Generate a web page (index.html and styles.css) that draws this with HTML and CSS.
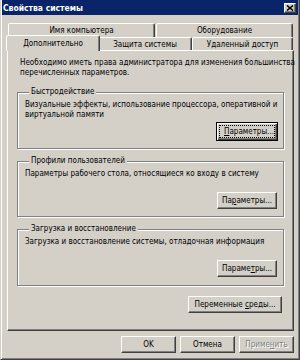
FILE: index.html
```html
<!DOCTYPE html>
<html lang="ru">
<head>
<meta charset="utf-8">
<title>Свойства системы</title>
<link rel="stylesheet" href="styles.css">
</head>
<body>
<div class="window">
  <div class="titlebar">
    <span class="title">Свойства системы</span>
    <span class="close"><svg width="8" height="6" viewBox="0 0 8 6"><path d="M1 0.5L7 5.5M7 0.5L1 5.5" stroke="#000" stroke-width="1.6" fill="none"/></svg></span>
  </div>
  <div class="tabs">
    <div class="tabrow back">
      <div class="tab t-name">Имя компьютера</div>
      <div class="tab t-hw">Оборудование</div>
    </div>
    <div class="tabrow front">
      <div class="tab sel t-adv">Дополнительно</div>
      <div class="tab t-prot">Защита системы</div>
      <div class="tab t-remote">Удаленный доступ</div>
    </div>
  </div>
  <div class="panel">
    <p class="intro">Необходимо иметь права администратора для изменения большинства<br>перечисленных параметров.</p>
    <div class="group">
      <div class="glabel">Быстродействие</div>
      <p class="gdesc">Визуальные эффекты, использование процессора, оперативной и<br>виртуальной памяти</p>
      <div class="gbtns"><button class="btn def"><span class="focus"><u>П</u>араметры...</span></button></div>
    </div>
    <div class="group">
      <div class="glabel">Профили пользователей</div>
      <p class="gdesc">Параметры рабочего стола, относящиеся ко входу в систему</p>
      <div class="gbtns"><button class="btn"><span>Па<u>р</u>аметры...</span></button></div>
    </div>
    <div class="group g3">
      <div class="glabel">Загрузка и восстановление</div>
      <p class="gdesc">Загрузка и восстановление системы, отладочная информация</p>
      <div class="gbtns"><button class="btn"><span>Параме<u>т</u>ры...</span></button></div>
    </div>
    <div class="envrow"><button class="btn env"><span>Переменные <u>с</u>реды...</span></button></div>
  </div>
  <div class="footer">
    <button class="btn"><span>OK</span></button>
    <button class="btn"><span>Отмена</span></button>
    <button class="btn dis"><span>Приме<u>н</u>ить</span></button>
  </div>
</div>
</body>
</html>
```
FILE: styles.css
```css
* { box-sizing: border-box; }
html, body { margin: 0; padding: 0; background: #d4d0c8; }
body {
  font-family: "DejaVu Sans Condensed", "DejaVu Sans", sans-serif;
  font-size: 8px;
  color: #000;
}
.window {
  width: 300px;
  height: 360px;
  background: #d4d0c8;
  border: 1px solid;
  border-top: 0;
  border-color: #d4d0c8 #404040 #404040 #d4d0c8;
  box-shadow: inset 1px 0 #fff, inset -1px -1px #808080;
  display: flex;
  flex-direction: column;
}
.titlebar {
  height: 15px;
  margin: 0 1px;
  background: #0a246a;
  display: flex;
  align-items: center;
  justify-content: space-between;
  padding: 0 2px 0 1px;
}
.title {
  color: #fff;
  font-weight: bold;
  font-size: 8.5px;
  white-space: nowrap;
}
.close {
  width: 12px;
  height: 10px;
  background: #d4d0c8;
  border: 1px solid;
  border-color: #fff #404040 #404040 #fff;
  box-shadow: inset -1px -1px #808080;
  display: flex;
  align-items: center;
  justify-content: center;
}
.close svg { display: block; }
.tabs { margin: 8px 0 0 7px; }
.tabrow { display: flex; }
.tab {
  background: #d4d0c8;
  border: 1px solid;
  border-bottom: 0;
  border-color: #fff #404040 transparent #fff;
  box-shadow: inset -1px 0 #808080;
  border-radius: 2px 2px 0 0;
  display: flex;
  align-items: center;
  justify-content: center;
  white-space: nowrap;
}
.back .tab { height: 14px; }
.front .tab { height: 13px; }
.t-name { width: 147px; margin-right: 1px; }
.t-hw { width: 137px; }
.t-adv { width: 90px; }
.t-prot { width: 94px; }
.t-remote { width: 101px; }
.tab.sel {
  position: relative;
  z-index: 2;
  width: 94px;
  height: 16px;
  margin: -2px -2px -1px -2px;
  padding-bottom: 1px;
}
.panel {
  margin-left: 6px;
  width: 287px;
  height: 281px;
  border: 1px solid;
  border-color: #fff #404040 #404040 #fff;
  box-shadow: inset -1px -1px #808080;
  padding: 7px 9px 0 9px;
}
.intro {
  margin: 0 0 0 3px;
  line-height: 9.5px;
  white-space: nowrap;
}
.group {
  margin-top: 15px;
  border: 1px solid #808080;
  box-shadow: 1px 1px #fff, inset 1px 1px #fff;
  padding: 0 6px 7px 7px;
  width: 267px;
}
.group + .group { margin-top: 12px; }
.g3 { padding-bottom: 8px; }
.glabel {
  width: fit-content;
  margin: -6px 0 0 4px;
  padding: 0 2px;
  line-height: 10px;
  background: #d4d0c8;
  white-space: nowrap;
}
.gdesc {
  margin: 3px 0 0 0;
  height: 19px;
  line-height: 9.5px;
  white-space: nowrap;
}
.gbtns {
  display: flex;
  justify-content: flex-end;
  margin-top: 4px;
}
.btn {
  font: inherit;
  color: #000;
  background: #d4d0c8;
  border: 1px solid;
  border-color: #fff #404040 #404040 #fff;
  box-shadow: inset -1px -1px #808080;
  height: 17px;
  width: 60px;
  padding: 0;
  margin: 0;
  display: flex;
  align-items: center;
  justify-content: center;
  white-space: nowrap;
  line-height: 9px;
}
.btn span { white-space: pre; }
.btn u { text-decoration-thickness: 1px; text-underline-offset: 1px; }
.btn.def {
  border: 1px solid #000;
  box-shadow: inset 1px 1px #fff, inset -1px -1px #404040, inset -2px -2px #808080;
  width: 62px;
  height: 19px;
  margin: -1px -1px 0 0;
}
.focus {
  outline: 1px dotted #000;
  outline-offset: 0;
  padding: 1px 4px;
  width: 54px;
  text-align: center;
}
.envrow {
  display: flex;
  justify-content: flex-end;
  margin: 10px 2px 0 0;
}
.btn.env { width: 94px; }
.footer {
  display: flex;
  justify-content: flex-end;
  gap: 4px;
  margin-top: 5px;
  padding-right: 5px;
}
.footer .btn { width: 55px; }
.btn.dis {
  color: #808080;
  text-shadow: 1px 1px 0 #fff;
}
```
